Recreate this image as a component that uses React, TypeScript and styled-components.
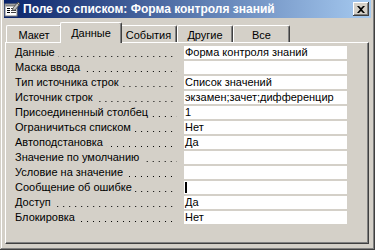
import styled, { createGlobalStyle } from 'styled-components';

const GlobalStyle = createGlobalStyle`
  html, body {
    margin: 0;
    padding: 0;
    background: #d4d0c8;
    overflow: hidden;
  }
  * {
    box-sizing: border-box;
  }
`;

const Window = styled.div`
  width: 375px;
  height: 254px;
  margin-top: -4px;
  padding: 4px;
  background: #d4d0c8;
  display: flex;
  flex-direction: column;
  font-family: 'Liberation Sans', Arial, sans-serif;
  font-size: 11px;
  color: #000;
  box-shadow: inset -1px -1px #404040, inset 1px 1px #d4d0c8,
    inset -2px -2px #808080, inset 2px 2px #fff;
`;

const TitleBar = styled.div`
  height: 18px;
  display: flex;
  align-items: center;
  padding: 0 2px 0 0;
  background: linear-gradient(to right, #0a246a, #a6caf0);
`;

const TitleText = styled.span`
  flex: 1;
  margin-left: 3px;
  color: #fff;
  font-weight: bold;
  font-size: 12px;
  white-space: nowrap;
`;

const CloseButton = styled.div`
  width: 16px;
  height: 14px;
  display: flex;
  align-items: center;
  justify-content: center;
  background: #d4d0c8;
  box-shadow: inset -1px -1px #404040, inset 1px 1px #fff,
    inset -2px -2px #808080, inset 2px 2px #d4d0c8;
`;

const TabStrip = styled.div`
  height: 24px;
  display: flex;
  align-items: flex-end;
  padding-left: 2px;
  position: relative;
  z-index: 1;
`;

const Tab = styled.div<{ $active?: boolean; $w: number }>`
  width: ${(p) => p.$w + (p.$active ? 4 : 0)}px;
  height: ${(p) => (p.$active ? 21 : 17)}px;
  margin: ${(p) => (p.$active ? '0 -2px -1px -2px' : '0')};
  padding-top: ${(p) => (p.$active ? 4 : 3)}px;
  text-align: center;
  background: #d4d0c8;
  border-top-left-radius: 2px;
  border-top-right-radius: 2px;
  border-left: 1px solid #fff;
  border-top: 1px solid #fff;
  border-right: 1px solid #404040;
  box-shadow: inset -1px 0 #808080;
  position: relative;
  z-index: ${(p) => (p.$active ? 2 : 1)};
`;

const Panel = styled.div`
  flex: 1;
  margin: 0 2px 2px 1px;
  padding: 3px 0 0 9px;
  border-left: 1px solid #fff;
  border-top: 1px solid #fff;
  border-right: 1px solid #404040;
  border-bottom: 1px solid #404040;
  box-shadow: inset -1px -1px #808080;
`;

const Row = styled.div`
  display: flex;
  height: 13px;
  margin-bottom: 2px;
  line-height: 13px;
`;

const Label = styled.div`
  width: 169px;
  display: flex;
  padding-right: 7px;
  white-space: nowrap;
`;

const Leader = styled.span`
  flex: 1;
  margin-left: 3px;
  background-image: linear-gradient(to right, #000 0 1px, transparent 1px);
  background-size: 6px 1px;
  background-repeat: repeat-x;
  background-position: right bottom 2px;
`;

const Value = styled.div`
  width: 163px;
  padding-left: 1px;
  background: #fff;
  white-space: nowrap;
  overflow: hidden;
`;

const Caret = styled.span`
  display: inline-block;
  width: 2px;
  height: 11px;
  margin-top: 1px;
  background: #000;
  vertical-align: top;
`;

const FormIcon = () => (
  <svg width="16" height="16" viewBox="0 0 16 16">
    <rect x="1" y="3" width="12" height="12" fill="#fff" stroke="#808080" />
    <rect x="1.5" y="3.5" width="11" height="2" fill="#808080" />
    <rect x="3" y="7" width="3" height="1" fill="#000" />
    <rect x="7" y="7" width="5" height="1" fill="#404040" />
    <rect x="3" y="9" width="3" height="1" fill="#000" />
    <rect x="7" y="9" width="5" height="1" fill="#404040" />
    <rect x="3" y="11" width="3" height="1" fill="#000" />
    <rect x="7" y="11" width="5" height="1" fill="#404040" />
    <path d="M9 7 L14 1 L16 3 L11 9 L8.5 9.5 Z" fill="#c0c0c0" stroke="#404040" strokeWidth="0.8" />
    <path d="M13 2 L15 4" stroke="#404040" strokeWidth="0.8" />
  </svg>
);

const CloseIcon = () => (
  <svg width="8" height="7" viewBox="0 0 8 7">
    <path d="M0 0 L2 0 L4 2 L6 0 L8 0 L5 3.5 L8 7 L6 7 L4 5 L2 7 L0 7 L3 3.5 Z" fill="#000" />
  </svg>
);

const tabs = [
  { name: 'Макет', w: 56 },
  { name: 'Данные', w: 58, active: true },
  { name: 'События', w: 57 },
  { name: 'Другие', w: 56 },
  { name: 'Все', w: 57 },
];

const rows: { label: string; value?: string; caret?: boolean }[] = [
  { label: 'Данные', value: 'Форма контроля знаний' },
  { label: 'Маска ввода' },
  { label: 'Тип источника строк', value: 'Список значений' },
  { label: 'Источник строк', value: 'экзамен;зачет;дифференцир' },
  { label: 'Присоединенный столбец', value: '1' },
  { label: 'Ограничиться списком', value: 'Нет' },
  { label: 'Автоподстановка', value: 'Да' },
  { label: 'Значение по умолчанию' },
  { label: 'Условие на значение' },
  { label: 'Сообщение об ошибке', caret: true },
  { label: 'Доступ', value: 'Да' },
  { label: 'Блокировка', value: 'Нет' },
];

export default function App() {
  return (
    <>
      <GlobalStyle />
      <Window>
        <TitleBar>
          <FormIcon />
          <TitleText>Поле со списком: Форма контроля знаний</TitleText>
          <CloseButton>
            <CloseIcon />
          </CloseButton>
        </TitleBar>
        <TabStrip>
          {tabs.map((t) => (
            <Tab key={t.name} $w={t.w} $active={t.active}>
              {t.name}
            </Tab>
          ))}
        </TabStrip>
        <Panel>
          {rows.map((r) => (
            <Row key={r.label}>
              <Label>
                {r.label}
                <Leader />
              </Label>
              <Value>{r.caret ? <Caret /> : r.value}</Value>
            </Row>
          ))}
        </Panel>
      </Window>
    </>
  );
}
